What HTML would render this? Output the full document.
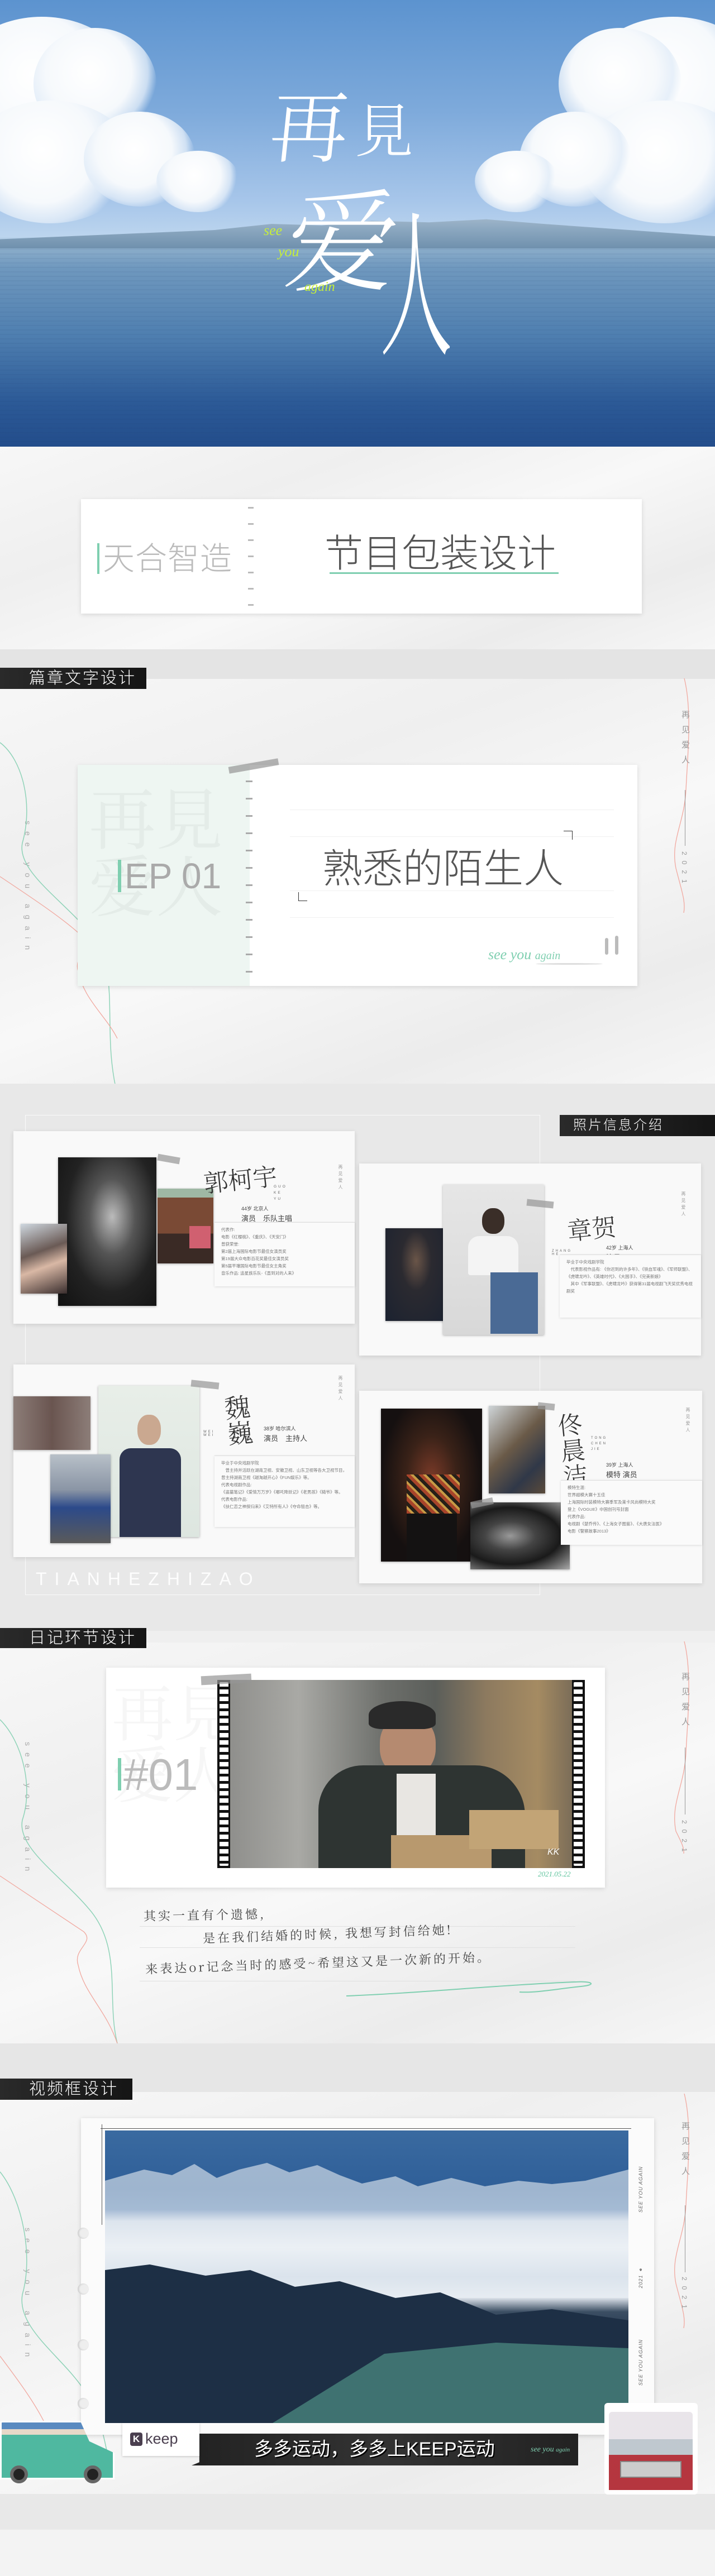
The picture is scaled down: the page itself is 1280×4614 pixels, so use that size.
<!DOCTYPE html>
<html><head><meta charset="utf-8">
<style>
*{margin:0;padding:0;box-sizing:border-box}
body{width:1280px;height:4614px;position:relative;overflow:hidden;background:#efefef;font-family:"Liberation Sans","Noto Sans CJK SC",sans-serif}
.a{position:absolute}
.paper{background:linear-gradient(160deg,#f7f7f7 0%,#efefef 30%,#f8f8f8 55%,#ececec 80%,#f6f6f6 100%)}
.lbl{position:absolute;left:0;height:38px;background:linear-gradient(90deg,#2a2a2a,#151515);color:#fff;font-size:29px;letter-spacing:3px;line-height:38px;padding-left:52px;font-weight:300}
.card{position:absolute;background:#fff;box-shadow:0 2px 8px rgba(0,0,0,.12)}
.vt{position:absolute;writing-mode:vertical-rl;color:#999;font-size:13px;letter-spacing:8px}
.ph{position:absolute;box-shadow:0 1px 4px rgba(0,0,0,.3)}
.info{position:absolute;background:#fafafa;border-top:1px solid #ddd;box-shadow:0 1px 4px rgba(0,0,0,.12);font-size:7.5px;color:#777;line-height:13px;padding:6px 12px}
.nm{position:absolute;font-family:"Noto Serif CJK SC",serif;color:#333;font-weight:300}
.sub{position:absolute;font-size:13px;color:#444}
.tape{position:absolute;height:12px;background:rgba(150,150,150,.7)}
.dash{position:absolute;width:10px;height:3px;background:#bbb}
.pf{position:absolute;border-radius:50%;background:radial-gradient(circle at 45% 40%,#fff 0%,#f6f9fc 45%,rgba(225,236,248,.8) 62%,rgba(200,220,240,0) 72%)}
</style></head><body>

<!-- HERO -->
<div class="a" style="left:0;top:0;width:1280px;height:800px;background:linear-gradient(180deg,#5c93cf 0%,#7eaadb 25%,#a7c6ea 45%,#bcd5ee 53%,#8fb0cc 55%,#6f98be 60%,#4f7fb0 75%,#2c5a97 90%,#234d8b 100%);overflow:hidden">
 <div class="pf" style="left:-90px;top:30px;width:330px;height:260px"></div>
 <div class="pf" style="left:60px;top:50px;width:220px;height:200px"></div>
 <div class="pf" style="left:-60px;top:180px;width:300px;height:220px"></div>
 <div class="pf" style="left:150px;top:200px;width:200px;height:170px"></div>
 <div class="pf" style="left:280px;top:270px;width:150px;height:110px"></div>
 <div class="pf" style="left:1040px;top:30px;width:330px;height:260px"></div>
 <div class="pf" style="left:1000px;top:50px;width:220px;height:200px"></div>
 <div class="pf" style="left:1040px;top:180px;width:300px;height:220px"></div>
 <div class="pf" style="left:930px;top:200px;width:200px;height:170px"></div>
 <div class="pf" style="left:850px;top:270px;width:150px;height:110px"></div>
 <div class="a" style="left:0;top:390px;width:1280px;height:55px;background:linear-gradient(180deg,#9fb6ca,#8aa6bf 40%,#6f90ad 100%);clip-path:polygon(0 70%,15% 55%,30% 40%,38% 20%,45% 25%,52% 10%,60% 15%,68% 5%,76% 20%,85% 35%,100% 60%,100% 100%,0 100%)"></div>
 <div class="a" style="left:0;top:440px;width:1280px;height:360px;background:repeating-linear-gradient(180deg,rgba(255,255,255,0) 0 6px,rgba(20,50,100,.06) 6px 8px)"></div>
 <div class="a" style="left:485px;top:150px;font-family:'Noto Serif CJK SC',serif;font-size:140px;color:#fff;font-weight:300;line-height:1;transform:skewX(-6deg)">再</div>
 <div class="a" style="left:635px;top:175px;font-family:'Noto Serif CJK SC',serif;font-size:105px;color:#fff;font-weight:300;line-height:1">見</div>
 <div class="a" style="left:515px;top:320px;font-family:'Noto Serif CJK SC',serif;font-size:200px;color:#fff;font-weight:300;line-height:1;transform:skewX(-8deg)">爱</div>
 <div class="a" style="left:680px;top:350px;font-family:'Noto Serif CJK SC',serif;font-size:130px;color:#fff;font-weight:300;line-height:1;transform:scaleY(2.2);transform-origin:top">人</div>
 <div class="a" style="left:472px;top:400px;color:#c6ee3a;font-family:'Liberation Serif',serif;font-style:italic;font-size:26px;line-height:1">see</div>
 <div class="a" style="left:498px;top:438px;color:#c6ee3a;font-family:'Liberation Serif',serif;font-style:italic;font-size:26px;line-height:1">you</div>
 <div class="a" style="left:545px;top:502px;color:#c6ee3a;font-family:'Liberation Serif',serif;font-style:italic;font-size:24px;line-height:1">again</div>
</div>

<!-- S1 -->
<div class="a paper" style="left:0;top:800px;width:1280px;height:363px"></div>
<div class="card" style="left:145px;top:894px;width:1004px;height:205px">
 <div class="a" style="left:29px;top:79px;width:4px;height:55px;background:#7fcfb0"></div>
 <div class="a" style="left:39px;top:72px;font-size:57px;color:#bbb;font-weight:300;line-height:70px;letter-spacing:1px">天合智造</div>
 <div class="dash" style="left:299px;top:14px"></div><div class="dash" style="left:299px;top:43px"></div><div class="dash" style="left:299px;top:72px"></div><div class="dash" style="left:299px;top:101px"></div><div class="dash" style="left:299px;top:130px"></div><div class="dash" style="left:299px;top:159px"></div><div class="dash" style="left:299px;top:188px"></div>
 <div class="a" style="left:436px;top:58px;font-size:69px;color:#555;font-weight:300;line-height:80px">节目包装设计</div>
 <div class="a" style="left:445px;top:131px;width:410px;height:3px;background:#7fcfb0"></div>
</div>

<!-- grey band + S2 -->
<div class="a" style="left:0;top:1163px;width:1280px;height:55px;background:#e4e4e4"></div>
<div class="a paper" style="left:0;top:1216px;width:1280px;height:725px"></div>
<div class="lbl" style="top:1196px;width:262px;height:38px">篇章文字设计</div>
<div class="vt" style="left:42px;top:1470px;letter-spacing:12px;font-size:14px;color:#aaa">see you again</div>
<svg class="a" style="left:0;top:1320px" width="260" height="640"><path d="M0 10 C40 40,60 120,40 190 C30 240,110 290,160 350 C220 420,180 520,210 640" fill="none" stroke="#8fd3b8" stroke-width="1.5"/><path d="M0 250 C60 290,120 330,150 360 C170 380,130 390,140 420 C150 470,190 500,210 540" fill="none" stroke="#f1a9a0" stroke-width="1.3"/></svg>
<svg class="a" style="left:1180px;top:1215px" width="60" height="420"><path d="M45 0 C60 60,50 150,48 200 C45 260,20 290,30 340 C40 380,48 400,44 420" fill="none" stroke="#f1a9a0" stroke-width="1.3"/></svg>
<div class="vt" style="left:1216px;top:1272px;font-size:15px;letter-spacing:12px">再见爱人</div>
<div class="a" style="left:1226px;top:1415px;width:1px;height:100px;background:#999"></div>
<div class="vt" style="left:1218px;top:1525px;font-size:12px;letter-spacing:10px">2021</div>

<div class="card" style="left:139px;top:1370px;width:1002px;height:396px">
 <div class="a" style="left:0;top:0;width:308px;height:396px;background:#eef6f2"></div>
 <div class="a" style="left:20px;top:30px;font-family:'Noto Serif CJK SC',serif;font-size:120px;color:rgba(0,0,0,.04);line-height:1">再見<br>爱人</div>
 <div class="a" style="left:72px;top:170px;width:6px;height:58px;background:#7fcfb0"></div>
 <div class="a" style="left:84px;top:160px;font-size:64px;color:#aaa;font-weight:300;line-height:78px">EP 01</div>
 <div class="a" style="left:301px;top:0;width:12px;height:396px;background:repeating-linear-gradient(180deg,transparent 0 28px,#aaa 28px 31px)"></div>
 <div class="tape" style="left:270px;top:-4px;width:90px;transform:rotate(-10deg)"></div>
 <div class="a" style="left:380px;top:80px;width:580px;height:1px;background:#f0f0f0"></div>
 <div class="a" style="left:380px;top:128px;width:580px;height:1px;background:#f0f0f0"></div>
 <div class="a" style="left:380px;top:225px;width:580px;height:1px;background:#f0f0f0"></div>
 <div class="a" style="left:380px;top:273px;width:580px;height:1px;background:#f0f0f0"></div>
 <div class="a" style="left:438px;top:145px;font-size:72px;color:#555;font-weight:300;line-height:85px">熟悉的陌生人</div>
 <div class="a" style="left:870px;top:118px;width:16px;height:16px;border-top:1.5px solid #333;border-right:1.5px solid #333"></div>
 <div class="a" style="left:395px;top:228px;width:16px;height:16px;border-bottom:1.5px solid #333;border-left:1.5px solid #333"></div>
 <div class="a" style="left:735px;top:325px;color:#7fcfb0;font-family:'Liberation Serif',serif;font-style:italic;font-size:26px">see you <span style="font-size:20px">again</span></div>
 <div class="a" style="left:820px;top:355px;width:120px;height:3px;background:#ddd;border-radius:50%"></div>
 <div class="a" style="left:944px;top:310px;width:6px;height:30px;background:#bbb;border-radius:3px"></div>
 <div class="a" style="left:962px;top:306px;width:6px;height:34px;background:#bbb;border-radius:3px"></div>
</div>

<!-- S3 PHOTOS -->
<div class="a" style="left:0;top:1941px;width:1280px;height:980px;background:#e8e8e8"></div>
<div class="a" style="left:45px;top:1997px;width:922px;height:860px;border:1px solid #fafafa"></div>
<div class="a" style="left:64px;top:2810px;font-size:32px;letter-spacing:14px;color:rgba(255,255,255,.9);font-weight:300">TIANHEZHIZAO</div>
<div class="lbl" style="left:1002px;top:1997px;width:278px;padding-left:24px;font-size:24px;line-height:38px">照片信息介绍</div>

<!-- card A -->
<div class="card" style="left:24px;top:2026px;width:611px;height:345px;background:#f9f9f9">
 <div class="ph" style="left:80px;top:47px;width:176px;height:266px;background:radial-gradient(ellipse at 55% 40%,#bbb 0%,#555 30%,#222 60%,#111 100%)"></div>
 <div class="ph" style="left:258px;top:103px;width:100px;height:134px;background:linear-gradient(180deg,#9fb8a4 0 12%,#7a4a35 12% 60%,#3a2a25 60%)"></div>
 <div class="a" style="left:315px;top:170px;width:38px;height:40px;background:#d06070"></div>
 <div class="ph" style="left:13px;top:166px;width:83px;height:125px;background:linear-gradient(160deg,#cfd8e0,#6a5a55 40%,#d9b8a5 60%,#3a2e2e)"></div>
 <div class="tape" style="left:258px;top:44px;width:40px;transform:rotate(10deg)"></div>
 <div class="nm" style="left:340px;top:52px;font-size:44px;transform:rotate(-6deg)">郭柯宇</div>
 <div class="a" style="left:466px;top:94px;font-size:6.5px;color:#666;letter-spacing:3px;line-height:11px">GUO<br>KE<br>YU</div>
 <div class="sub" style="left:408px;top:132px;font-size:9px">44岁 北京人</div>
 <div class="sub" style="left:408px;top:146px">演员　乐队主唱</div>
 <div class="vt" style="left:580px;top:60px;font-size:8px;letter-spacing:4px">再见爱人</div>
 <div class="info" style="left:360px;top:163px;width:251px;height:115px">代表作:<br>电影《红樱桃》、《重庆》、《天安门》<br>曾获荣誉:<br>第2届上海国际电影节最佳女演员奖<br>第19届大众电影百花奖最佳女演员奖<br>第5届平壤国际电影节最佳女主角奖<br>音乐作品: 追星族乐队-《直到对的人来》</div>
</div>
<!-- card B -->
<div class="card" style="left:643px;top:2084px;width:612px;height:344px;background:#f9f9f9">
 <div class="ph" style="left:47px;top:116px;width:110px;height:166px;background:radial-gradient(ellipse at 50% 35%,#6a5548 0%,#2b2a30 35%,#1b2230 100%)"></div>
 <div class="ph" style="left:150px;top:38px;width:181px;height:269px;background:linear-gradient(180deg,#e6e6e6 0%,#d8d8d8 100%)"></div>
 <div class="a" style="left:220px;top:80px;width:40px;height:46px;border-radius:45%;background:#3a2e28"></div>
 <div class="a" style="left:195px;top:130px;width:90px;height:70px;background:#f4f4f4;border-radius:20px 20px 4px 4px"></div>
 <div class="a" style="left:235px;top:195px;width:85px;height:110px;background:#4a6a95"></div>
 <div class="tape" style="left:300px;top:66px;width:48px;transform:rotate(6deg)"></div>
 <div class="nm" style="left:372px;top:82px;font-size:44px;transform:rotate(-6deg)">章贺</div>
 <div class="a" style="left:345px;top:154px;font-size:6px;color:#666;letter-spacing:3px">ZHANG<br>HE</div>
 <div class="sub" style="left:442px;top:144px;font-size:9px">42岁 上海人</div>
 <div class="sub" style="left:442px;top:158px">演员</div>
 <div class="vt" style="left:575px;top:50px;font-size:8px;letter-spacing:4px">再见爱人</div>
 <div class="info" style="left:359px;top:163px;width:253px;height:113px">毕业于中央戏剧学院<br>　代表影视作品有: 《你迟到的许多年》、《铁血军魂》、《军师联盟》、《虎啸龙吟》、《英雄时代》、《大国手》、《完美新娘》<br>　其中《军事联盟》、《虎啸龙吟》获得第31届电视剧飞天奖优秀电视剧奖</div>
</div>
<!-- card C -->
<div class="card" style="left:24px;top:2444px;width:611px;height:345px;background:#f9f9f9">
 <div class="ph" style="left:0;top:57px;width:138px;height:96px;background:linear-gradient(90deg,#8c7d78,#6a5550 50%,#8c7d78)"></div>
 <div class="ph" style="left:152px;top:38px;width:181px;height:271px;background:linear-gradient(180deg,#e8eee8,#dde6e0)"></div>
 <div class="a" style="left:222px;top:90px;width:42px;height:54px;border-radius:45%;background:#caa890"></div>
 <div class="a" style="left:190px;top:150px;width:110px;height:159px;background:#2e3650;border-radius:20px 20px 0 0"></div>
 <div class="ph" style="left:66px;top:161px;width:108px;height:159px;background:linear-gradient(180deg,#b8c0c8,#8a95a5 40%,#2c4a8a 60%,#5a5a5a)"></div>
 <div class="tape" style="left:318px;top:30px;width:50px;transform:rotate(6deg)"></div>
 <div class="nm" style="left:380px;top:52px;font-size:46px;transform:rotate(-6deg);line-height:1">魏<br>巍</div>
 <div class="a" style="left:340px;top:118px;font-size:6px;color:#666;letter-spacing:3px">WEI<br>WEI</div>
 <div class="sub" style="left:448px;top:108px;font-size:9px">38岁 哈尔滨人</div>
 <div class="sub" style="left:448px;top:122px">演员　主持人</div>
 <div class="vt" style="left:580px;top:20px;font-size:8px;letter-spacing:4px">再见爱人</div>
 <div class="info" style="left:360px;top:163px;width:251px;height:128px">毕业于中央戏剧学院<br>　曾主持并活跃在湖南卫视、安徽卫视、山东卫视等各大卫视节目，曾主持湖南卫视《越淘越开心》《FUN娱乐》等。<br>代表电视剧作品:<br>《盗墓笔记》《爱情万万岁》《哪吒降妖记》《老男孩》《糙爷》等。<br>代表电影作品:<br>《扶仁恋之神探归来》《艾特所有人》《夺命狙击》等。</div>
</div>
<!-- card D -->
<div class="card" style="left:643px;top:2491px;width:614px;height:345px;background:#f9f9f9">
 <div class="ph" style="left:39px;top:32px;width:181px;height:274px;background:radial-gradient(ellipse at 50% 45%,#7a3a28 0%,#3a2218 35%,#151010 70%)"></div>
 <div class="a" style="left:85px;top:150px;width:95px;height:70px;background:repeating-linear-gradient(45deg,#a8442a 0 6px,#c79a45 6px 10px,#262018 10px 16px)"></div>
 <div class="a" style="left:85px;top:220px;width:90px;height:86px;background:#141212"></div>
 <div class="ph" style="left:232px;top:27px;width:101px;height:157px;background:linear-gradient(135deg,#cfd5d8,#6a5a48 45%,#303848 75%,#5a4a3a)"></div>
 <div class="ph" style="left:199px;top:200px;width:178px;height:120px;background:radial-gradient(ellipse at 40% 50%,#999 0%,#444 30%,#1a1a1a 60%,#aaa 100%)"></div>
 <div class="tape" style="left:320px;top:22px;width:30px;transform:rotate(6deg)"></div>
 <div class="tape" style="left:200px;top:195px;width:40px;transform:rotate(-12deg)"></div>
 <div class="nm" style="left:360px;top:35px;font-size:44px;transform:rotate(-6deg);line-height:1.05">佟<br>晨<br>洁</div>
 <div class="a" style="left:415px;top:80px;font-size:6px;color:#666;letter-spacing:3px;line-height:10px">TONG<br>CHEN<br>JIE</div>
 <div class="sub" style="left:442px;top:126px;font-size:9px">39岁 上海人</div>
 <div class="sub" style="left:442px;top:140px">模特 演员</div>
 <div class="vt" style="left:583px;top:30px;font-size:8px;letter-spacing:4px">再见爱人</div>
 <div class="info" style="left:361px;top:160px;width:253px;height:116px">模特生涯:<br>世界超模大赛十五佳<br>上海国际时装模特大赛季军及莱卡风尚模特大奖<br>登上《VOGUE》中国创刊号封面<br>代表作品:<br>电视剧《楚乔传》、《上海女子图鉴》、《大唐女法医》<br>电影《警察故事2013》</div>
</div>

<!-- S4 DIARY -->
<div class="a paper" style="left:0;top:2942px;width:1280px;height:718px"></div>
<div class="lbl" style="top:2916px;width:262px;height:36px;line-height:36px">日记环节设计</div>
<div class="vt" style="left:42px;top:3120px;letter-spacing:12px;font-size:14px;color:#aaa">see you again</div>
<svg class="a" style="left:0;top:3060px" width="260" height="600"><path d="M0 20 C40 60,60 140,40 200 C30 250,110 300,160 360 C220 430,190 520,210 600" fill="none" stroke="#8fd3b8" stroke-width="1.5"/><path d="M0 300 C60 340,120 380,150 400 C170 420,130 430,140 460 C150 510,190 540,210 600" fill="none" stroke="#f1a9a0" stroke-width="1.3"/></svg>
<svg class="a" style="left:1180px;top:2940px" width="60" height="380"><path d="M45 0 C60 60,50 150,48 200 C45 260,20 290,30 340 C40 360,45 370,44 380" fill="none" stroke="#f1a9a0" stroke-width="1.3"/></svg>
<div class="vt" style="left:1216px;top:2995px;font-size:15px;letter-spacing:12px">再见爱人</div>
<div class="a" style="left:1226px;top:3130px;width:1px;height:120px;background:#999"></div>
<div class="vt" style="left:1218px;top:3260px;font-size:12px;letter-spacing:10px">2021</div>

<div class="card" style="left:190px;top:2987px;width:893px;height:394px">
 <div class="a" style="left:10px;top:20px;font-family:'Noto Serif CJK SC',serif;font-size:110px;color:rgba(0,0,0,.035);line-height:1">再見<br>爱人</div>
 <div class="a" style="left:21px;top:162px;width:6px;height:58px;background:#7fcfb0"></div>
 <div class="a" style="left:31px;top:150px;font-size:80px;color:#bbb;font-weight:300;line-height:84px">#01</div>
 <div class="a" style="left:199px;top:22px;width:658px;height:337px;background:#111"></div>
 <div class="a" style="left:203px;top:26px;width:16px;height:329px;background:repeating-linear-gradient(180deg,#fff 0 8px,transparent 8px 13px);border-radius:2px"></div>
 <div class="a" style="left:837px;top:26px;width:16px;height:329px;background:repeating-linear-gradient(180deg,#fff 0 8px,transparent 8px 13px);border-radius:2px"></div>
 <div class="a" style="left:222px;top:22px;width:612px;height:337px;background:linear-gradient(90deg,#8f8f8c 0%,#a9a9a5 20%,#6d6f6b 45%,#5b5e5a 60%,#8d7a5f 75%,#a58b62 90%,#7b6d58 100%)"></div>
 <div class="a" style="left:490px;top:85px;width:100px;height:110px;border-radius:45%;background:#b58a70"></div>
 <div class="a" style="left:470px;top:60px;width:120px;height:50px;border-radius:50% 50% 20% 20%;background:#2a2a2a"></div>
 <div class="a" style="left:380px;top:175px;width:370px;height:184px;border-radius:80px 90px 0 0;background:#2e3432"></div>
 <div class="a" style="left:520px;top:190px;width:70px;height:120px;background:#e8e6e2"></div>
 <div class="a" style="left:510px;top:300px;width:180px;height:59px;background:#b8996e"></div>
 <div class="a" style="left:650px;top:255px;width:160px;height:70px;background:#c2a476"></div>
 <div class="tape" style="left:170px;top:13px;width:90px;height:16px;transform:rotate(-3deg)"></div>
 <div class="a" style="left:790px;top:322px;color:#fff;font-size:16px;font-style:italic">KK</div>
 <div class="a" style="left:773px;top:362px;color:#5cc39b;font-size:13px;font-style:italic;font-family:'Liberation Serif',serif">2021.05.22</div>
</div>
<div class="a" style="left:250px;top:3450px;width:780px;height:1px;background:#e0e0e0"></div>
<div class="a" style="left:250px;top:3488px;width:780px;height:1px;background:#e0e0e0"></div>
<div class="a" style="left:250px;top:3548px;width:780px;height:1px;background:#e0e0e0"></div>
<div class="a" style="left:257px;top:3414px;font-family:'AR PL UKai CN','Noto Serif CJK SC',serif;font-size:22px;color:#444;letter-spacing:4px;transform:rotate(-1deg)">其实一直有个遗憾,</div>
<div class="a" style="left:363px;top:3448px;font-family:'AR PL UKai CN','Noto Serif CJK SC',serif;font-size:22px;color:#444;letter-spacing:4px;transform:rotate(-2deg)">是在我们结婚的时候, 我想写封信给她!</div>
<div class="a" style="left:260px;top:3500px;font-family:'AR PL UKai CN','Noto Serif CJK SC',serif;font-size:22px;color:#444;letter-spacing:4px;transform:rotate(-2deg)">来表达or记念当时的感受~希望这又是一次新的开始。</div>
<svg class="a" style="left:600px;top:3530px" width="480" height="60"><path d="M20 45 C150 40,300 25,430 20 C460 18,470 25,440 28 C400 32,360 40,330 38" fill="none" stroke="#7fcfb0" stroke-width="2"/></svg>

<!-- S5 VIDEO -->
<div class="a" style="left:0;top:3660px;width:1280px;height:90px;background:#e6e6e6"></div>
<div class="a paper" style="left:0;top:3747px;width:1280px;height:720px"></div>
<div class="a" style="left:0;top:4467px;width:1280px;height:64px;background:#e8e8e8"></div>
<div class="a" style="left:0;top:4531px;width:1280px;height:83px;background:#f3f3f3"></div>
<div class="lbl" style="top:3723px;width:237px;height:38px">视频框设计</div>
<div class="vt" style="left:42px;top:3990px;letter-spacing:12px;font-size:14px;color:#aaa">see you again</div>
<svg class="a" style="left:0;top:3880px" width="260" height="560"><path d="M0 10 C40 60,60 160,40 230 C30 290,110 340,150 400 C180 440,190 500,200 560" fill="none" stroke="#8fd3b8" stroke-width="1.5"/><path d="M0 340 C30 380,60 420,80 460" fill="none" stroke="#f1a9a0" stroke-width="1.3"/></svg>
<svg class="a" style="left:1180px;top:3750px" width="60" height="420"><path d="M45 0 C60 60,50 150,48 200 C45 260,20 290,30 340 C40 380,48 400,44 420" fill="none" stroke="#f1a9a0" stroke-width="1.3"/></svg>
<div class="vt" style="left:1216px;top:3800px;font-size:15px;letter-spacing:12px">再见爱人</div>
<div class="a" style="left:1226px;top:3950px;width:1px;height:120px;background:#999"></div>
<div class="vt" style="left:1218px;top:4078px;font-size:12px;letter-spacing:10px">2021</div>

<div class="a" style="left:145px;top:3794px;width:1026px;height:567px;background:#fbfbfb;box-shadow:0 2px 8px rgba(0,0,0,.15)"></div>
<div class="a" style="left:139px;top:3990px;width:20px;height:20px;border-radius:50%;background:#eee;box-shadow:inset 2px 0 3px rgba(0,0,0,.15)"></div>
<div class="a" style="left:139px;top:4090px;width:20px;height:20px;border-radius:50%;background:#eee;box-shadow:inset 2px 0 3px rgba(0,0,0,.15)"></div>
<div class="a" style="left:139px;top:4190px;width:20px;height:20px;border-radius:50%;background:#eee;box-shadow:inset 2px 0 3px rgba(0,0,0,.15)"></div>
<div class="a" style="left:139px;top:4295px;width:20px;height:20px;border-radius:50%;background:#eee;box-shadow:inset 2px 0 3px rgba(0,0,0,.15)"></div>
<div class="a" style="left:180px;top:3812px;width:950px;height:1px;background:#555"></div>
<div class="a" style="left:182px;top:3805px;width:1px;height:180px;background:#555"></div>
<div class="a" style="left:188px;top:3816px;width:937px;height:524px;background:linear-gradient(180deg,#3a6aa0 0%,#2f5f98 20%,#3d6da5 27%,#c9d6e4 31%,#eef2f7 40%,#c5d3e2 50%,#e3e9f0 57%,#3b4e63 62%,#1f3048 72%,#213a4c 82%,#3a6a6c 88%,#4a7a78 100%)"></div>
<svg class="a" style="left:188px;top:3816px" width="937" height="524"><polygon points="0,90 70,70 120,80 160,60 200,85 240,70 290,58 330,75 380,62 420,80 460,95 520,82 560,100 620,85 680,100 740,90 800,96 860,90 937,70 937,300 0,300" fill="#e9eef4" opacity=".6"/><polygon points="0,250 80,240 180,260 260,250 340,280 420,270 520,300 600,290 700,330 800,320 937,340 937,524 0,524" fill="#1d2f45"/><polygon points="300,524 500,400 700,380 937,390 937,524" fill="#3f7271"/></svg>
<div class="vt" style="left:1142px;top:3880px;font-size:9px;letter-spacing:1px;color:#666;transform:rotate(180deg);font-style:italic">SEE YOU AGAIN</div>
<div class="vt" style="left:1142px;top:4060px;font-size:9px;letter-spacing:1px;color:#666;transform:rotate(180deg);font-style:italic">2021 ♠</div>
<div class="vt" style="left:1142px;top:4190px;font-size:9px;letter-spacing:1px;color:#666;transform:rotate(180deg);font-style:italic">SEE YOU AGAIN</div>

<div class="a" style="left:343px;top:4359px;width:692px;height:57px;background:linear-gradient(90deg,#222,#333 50%,#222);clip-path:polygon(2% 0,100% 0,100% 100%,0 100%,2% 90%)"></div>
<div class="a" style="left:455px;top:4362px;color:#fff;font-size:34px;line-height:50px;text-shadow:2px 2px 0 #000">多多运动，多多上KEEP运动</div>
<div class="a" style="left:950px;top:4380px;color:#7fcfb0;font-style:italic;font-size:14px;font-family:'Liberation Serif',serif">see you <span style="font-size:11px">again</span></div>
<div class="a" style="left:219px;top:4340px;width:138px;height:59px;background:#fff;box-shadow:0 1px 4px rgba(0,0,0,.2)"></div>
<div class="a" style="left:233px;top:4357px;width:22px;height:24px;background:#4a3f4f;border-radius:4px;color:#fff;font-size:17px;line-height:24px;text-align:center;font-weight:bold">K</div>
<div class="a" style="left:260px;top:4350px;color:#4a3f4f;font-size:27px;line-height:36px">keep</div>

<!-- trucks -->
<div class="a" style="left:0;top:4336px;width:205px;height:105px;background:linear-gradient(180deg,#5a8ac0 0 12%,#e6d8c8 12% 22%,#4fb8a0 22% 100%);border-radius:4px 4px 0 0;border:3px solid #fff;clip-path:polygon(0 0,70% 0,78% 35%,100% 55%,100% 100%,0 100%)"></div>
<div class="a" style="left:18px;top:4416px;width:32px;height:32px;border-radius:50%;background:#222;border:6px solid #666"></div>
<div class="a" style="left:150px;top:4416px;width:32px;height:32px;border-radius:50%;background:#222;border:6px solid #666"></div>
<div class="a" style="left:1082px;top:4304px;width:167px;height:164px;background:#fff;border-radius:6px"></div>
<div class="a" style="left:1090px;top:4320px;width:150px;height:140px;background:linear-gradient(180deg,#e9e5ea 0 35%,#bfc8cf 35% 55%,#b5363f 55% 100%);border-radius:6px 6px 0 0"></div>
<div class="a" style="left:1110px;top:4408px;width:110px;height:30px;background:#ccc;border:2px solid #888"></div>
</body></html>
